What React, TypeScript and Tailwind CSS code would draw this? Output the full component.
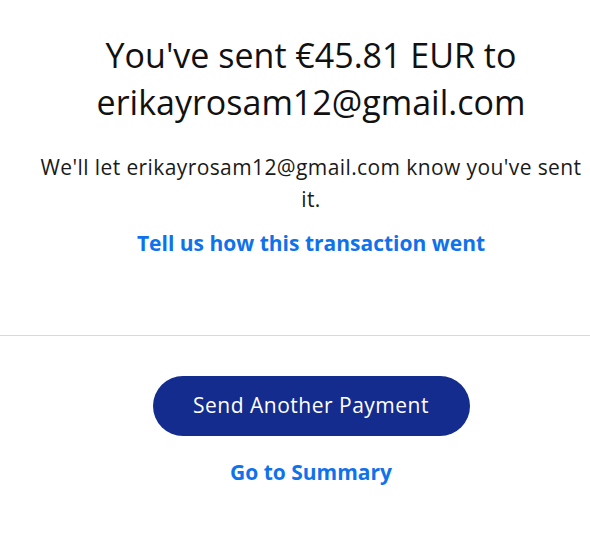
import React from "react";

export default function App() {
  return (
    <div className="w-[590px] h-[537px] bg-white flex flex-col" style={{ fontFamily: '"Open Sans", "Noto Sans", sans-serif' }}>
      <div className="pt-[32px] pl-[32px] flex flex-col items-center w-full">
        <h1 className="text-[34px] leading-[47px] text-[#111111] text-center font-normal max-w-[460px]">
          You've sent €45.81 EUR to erikayrosam12@gmail.com
        </h1>
        <p className="mt-[25px] text-[21px] leading-[32px] tracking-[0.4px] text-[#1a1a1a] text-center max-w-[550px]">
          We'll let erikayrosam12@gmail.com know you've sent it.
        </p>
        <a className="mt-[12px] text-[21px] leading-[32px] font-bold text-[#1072eb] text-center">
          Tell us how this transaction went
        </a>
      </div>
      <div className="mt-[76px] w-full h-px bg-[#dbd9d2]" />
      <div className="pl-[32px] flex flex-col items-center w-full">
        <button className="mt-[40px] w-[317px] h-[60px] rounded-full bg-[#142c8e] text-white text-[21px] tracking-[0.5px] font-medium">
          Send Another Payment
        </button>
        <a className="mt-[20px] text-[21px] leading-[32px] font-bold text-[#1072eb]">Go to Summary</a>
      </div>
    </div>
  );
}
